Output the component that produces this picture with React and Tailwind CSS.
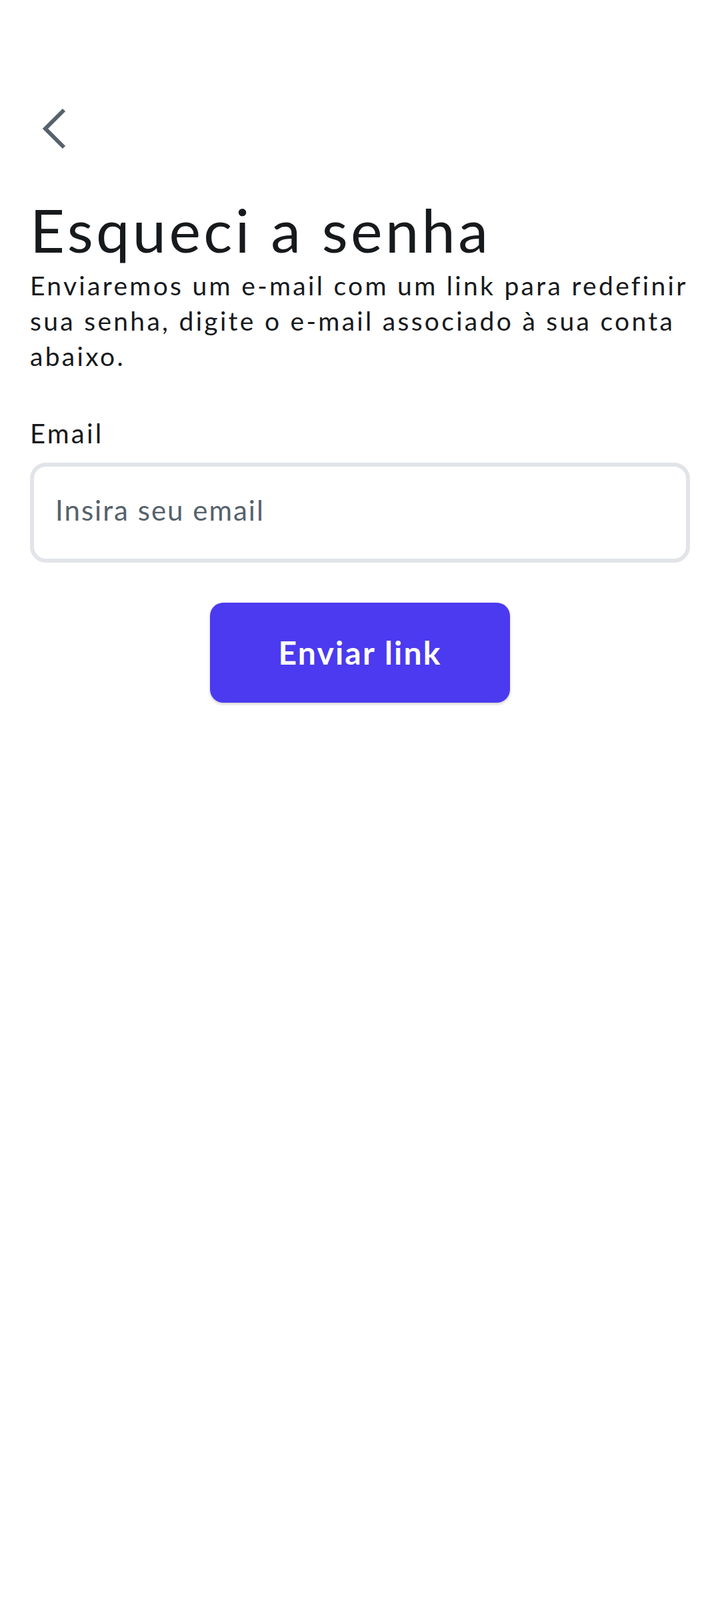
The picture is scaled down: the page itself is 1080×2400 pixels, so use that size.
export default function App() {
  return (
    <div className="min-h-[2400px] w-[1080px] bg-white font-['Lato',sans-serif] text-[#171a1d]">
      <div className="px-[45px] pt-[160px]">
        <button className="block h-[64px] w-[64px] text-[#56626c]">
          <svg viewBox="0 0 64 64" className="h-[64px] w-[64px]" fill="none">
            <path d="M51 5 L23 33 L51 61" stroke="currentColor" strokeWidth="6" />
          </svg>
        </button>

        <h1 className="mt-[68px] text-[90px] leading-[105px] font-normal tracking-[4.4px]">
          Esqueci a senha
        </h1>
        <p className="mt-[5px] text-[39px] leading-[53px] tracking-[3.3px]">
          Enviaremos um e-mail com um link para redefinir sua senha, digite o
          e-mail associado à sua conta abaixo.
        </p>

        <label className="mt-[65px] block text-[40px] leading-[48px] tracking-[3.2px]">Email</label>
        <input
          type="email"
          placeholder="Insira seu email"
          className="mt-[20px] block h-[150px] w-full rounded-[24px] border-[6px] border-[#e1e4e8] bg-white px-[32px] pb-[8px] text-[42px] tracking-[2px] text-[#171a1d] placeholder:text-[#56626c] outline-none"
        />

        <div className="mt-[60px] flex justify-center">
          <button className="h-[150px] w-[450px] rounded-[20px] bg-[#4b3aef] text-[48px] font-bold tracking-[2.2px] text-white shadow-[0_2px_4px_rgba(0,0,0,0.2)]">
            Enviar link
          </button>
        </div>
      </div>
    </div>
  );
}
